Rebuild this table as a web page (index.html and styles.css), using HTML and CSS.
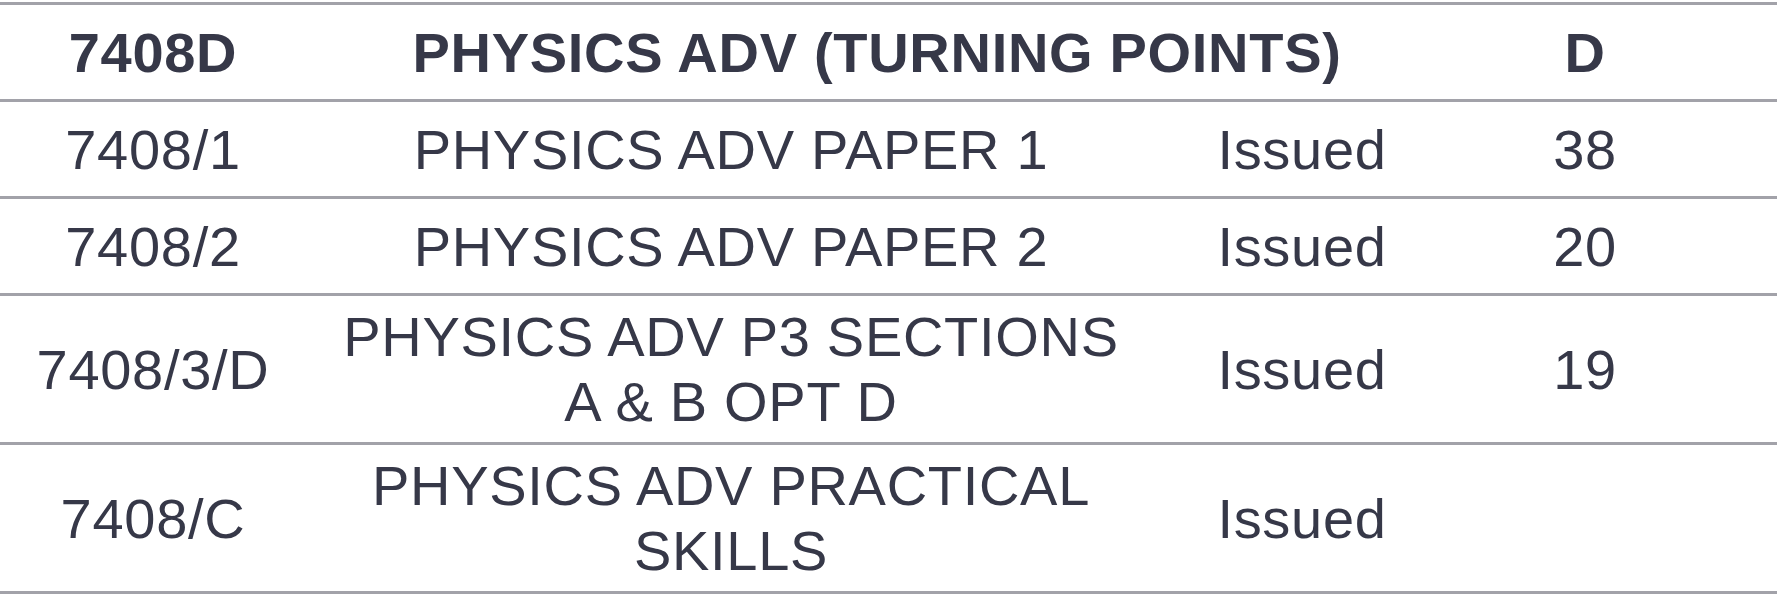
FILE: index.html
```html
<!DOCTYPE html>
<html lang="en">
<head>
<meta charset="utf-8">
<title>Results</title>
<link rel="stylesheet" href="styles.css">
</head>
<body>
<table class="results">
  <colgroup>
    <col class="c-code">
    <col class="c-title">
    <col class="c-status">
    <col class="c-grade">
    <col class="c-extra">
  </colgroup>
  <tbody>
    <tr class="head">
      <td>7408D</td>
      <td colspan="2">PHYSICS ADV (TURNING POINTS)</td>
      <td>D</td>
      <td></td>
    </tr>
    <tr>
      <td>7408/1</td>
      <td class="title">PHYSICS ADV PAPER 1</td>
      <td>Issued</td>
      <td>38</td>
      <td></td>
    </tr>
    <tr>
      <td>7408/2</td>
      <td class="title">PHYSICS ADV PAPER 2</td>
      <td>Issued</td>
      <td>20</td>
      <td></td>
    </tr>
    <tr>
      <td>7408/3/D</td>
      <td class="title">PHYSICS ADV P3 SECTIONS A &amp; B OPT D</td>
      <td>Issued</td>
      <td>19</td>
      <td></td>
    </tr>
    <tr>
      <td>7408/C</td>
      <td class="title">PHYSICS ADV PRACTICAL SKILLS</td>
      <td>Issued</td>
      <td></td>
      <td></td>
    </tr>
  </tbody>
</table>
</body>
</html>
```

FILE: styles.css
```css
html, body {
  margin: 0;
  padding: 0;
  background: #ffffff;
}

.results {
  width: 1777px;
  margin-top: 2px;
  border-collapse: collapse;
  table-layout: fixed;
  font-family: "Liberation Sans", Arial, sans-serif;
  font-size: 56px;
  letter-spacing: 0.7px;
  color: #363848;
}

.c-code { width: 306px; }
.c-title { width: 850px; }
.c-status { width: 292px; }
.c-grade { width: 274px; }
.c-extra { width: 55px; }

.results tr {
  border-top: 3px solid #a2a2a9;
  border-bottom: 3px solid #a2a2a9;
}

.results td {
  height: 78px;
  padding: 8px 20px;
  text-align: center;
  vertical-align: middle;
  line-height: 65px;
}

.results td.title {
  padding-left: 32px;
  padding-right: 32px;
}

.results .head td {
  font-weight: bold;
}
```
